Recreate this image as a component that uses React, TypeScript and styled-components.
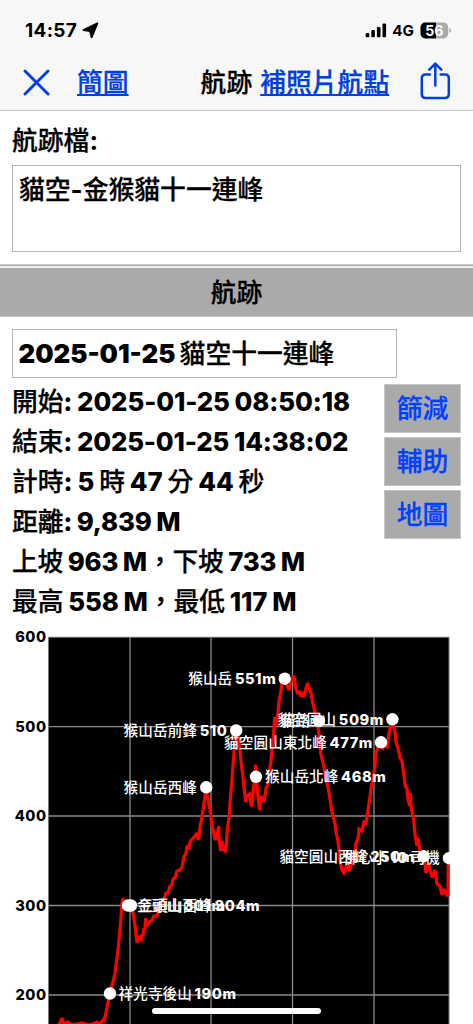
import React from "react";
import styled, { createGlobalStyle } from "styled-components";

const Global = createGlobalStyle`
  * { box-sizing: border-box; }
  html, body { margin: 0; padding: 0; background: #fff; }
  body { overflow: hidden; }
`;

const Screen = styled.div`
  width: 473px;
  height: 1024px;
  overflow: hidden;
  position: relative;
  background: #fff;
  color: #000;
  font-family: Inter, "Noto Sans CJK TC", sans-serif;
  font-weight: 700;
  font-size: 25.8px;
  line-height: 40px;
  white-space: nowrap;
`;

const Han = styled.span`
  font-family: "Noto Sans CJK TC", sans-serif;
  font-weight: 500;
  line-height: 1;
  -webkit-text-stroke: 0.25px currentColor;
`;

const Top = styled.header`
  height: 111px;
  background: #f7f7f7;
  border-bottom: 1px solid #c9c9c9;
`;

const StatusBar = styled.div`
  display: flex;
  align-items: center;
  height: 60px;
  padding: 1px 21px 0 25px;
  font-size: 19px;
  line-height: 24px;
`;

const Time = styled.span`
  font-weight: 700;
  margin-right: 5px;
  letter-spacing: 0.3px;
`;

const Spacer = styled.div`
  flex: 1;
`;

const Network = styled.span`
  font-size: 15.2px;
  font-weight: 700;
  margin: 0 6px 0 5px;
`;

const NavBar = styled.nav`
  display: flex;
  align-items: center;
  height: 44px;
  padding: 0 22px 0 23px;
`;

const NavLink = styled.a<{ $gap: number }>`
  color: #0040dd;
  margin-left: ${(p) => p.$gap}px;
  padding-top: 1px;
  text-decoration: underline;
  text-decoration-thickness: 2px;
  text-underline-offset: 2px;
  text-decoration-skip-ink: none;
`;

const NavTitle = styled.span`
  margin-left: 72px;
  padding-top: 1px;
`;

const FileSection = styled.section`
  height: 153px;
  padding: 10px 12px 0;
`;

const FileLabel = styled.div`
  height: 40px;
`;

const FileBox = styled.div`
  height: 87px;
  margin-top: 4px;
  padding: 4px 6px;
  border: 1px solid #b4b4b4;
`;

const SectionHead = styled.h2`
  height: 53px;
  margin: 0;
  border-top: 1px solid #ccc;
  border-bottom: 1px solid #c4c4c4;
  background: linear-gradient(#aaa 0 1px, #eee 1px 3px, #aaa 3px);
  font-size: inherit;
  line-height: 56px;
  text-align: center;
`;

const Details = styled.section`
  display: flex;
  justify-content: space-between;
  height: 306px;
  padding: 12px 12px 0;
`;

const NameBox = styled.div`
  width: 385px;
  height: 49px;
  margin-bottom: 4px;
  padding-left: 5.5px;
  border: 1px solid #b4b4b4;
  font-weight: 900;
  line-height: 47px;
  word-spacing: -1px;
`;

const Stats = styled.div`
  width: 372px;
`;

const Stat = styled.div<{ $word: number; $letter: number }>`
  height: 40px;
  font-weight: 800;
  word-spacing: ${(p) => p.$word}px;
  letter-spacing: ${(p) => p.$letter}px;
`;

const Actions = styled.div`
  display: flex;
  flex-direction: column;
  gap: 4px;
  margin-top: 55px;
`;

const Action = styled.button`
  width: 77px;
  height: 49px;
  padding: 0;
  border: 1px solid #c6c6c6;
  background: #aaa;
  color: #0040ff;
  font: inherit;
  line-height: 48px;
`;

const Chart = styled.svg`
  display: block;
`;

const HomeIndicator = styled.div`
  position: absolute;
  left: 152px;
  top: 1008px;
  width: 169px;
  height: 6px;
  border-radius: 3px;
  background: #fff;
`;

const split = (text: string) => text.split(/([\u3000-\u9fff\uff00-\uffef]+)/).filter(Boolean);
const isHan = (s: string) => /[\u3000-\u9fff\uff00-\uffef]/.test(s);

function Mixed({ children }: { children: string }) {
  return <>{split(children).map((s, i) => (isHan(s) ? <Han key={i}>{s}</Han> : s))}</>;
}

const stats = [
  { text: "開始: 2025-01-25 08:50:18", word: -0.8, letter: -0.12 },
  { text: "結束: 2025-01-25 14:38:02", word: -0.8, letter: -0.16 },
  { text: "計時: 5 時 47 分 44 秒", word: -0.6, letter: -0.08 },
  { text: "距離: 9,839 M", word: -1, letter: -0.15 },
  { text: "上坡 963 M，下坡 733 M", word: -0.7, letter: -0.25 },
  { text: "最高 558 M，最低 117 M", word: -0.7, letter: -0.1 },
];

const track =
  "58,1026 60,1023 62,1018 64,1024 68,1022 72,1025 82,1023 90,1025 97,1022 100,1024 103,1020 104,1022 106,1012 110,993 113,982 115,973 117,958 118,950 120,930 121,917 122,903 123,898 124,908 127,904 132,908 133,913 135,925 137,943 138.5,936 141,941 142,934 143,936 144,928 145,930 145.7,918 147,926 149,922 152,920 154,916 157,916 160,903 163,902 166,893 168,893 170,886 172,885 173,879 175,878 177,871 180,870 182,867 184,857 186,853 187,847 189,848 190,842 193,838 195,836 197,833 198.5,840 200,827 202,817 204,803 206,790 208,800 210,810 212,826 214,834 215,840 217,836 218.7,826 219,840 220.7,851 222,841 224,850 226,852 227,833 229,817 231,790 232,780 233,765 234,753 235,738 236,727 238,736 240,751 241,762 243,777 244,787 245.7,802 247,796 249.7,794 251,805 252,806 253,794 254,783 255.7,765 257,785 258,798 259.7,810 261,796 264,802 266,788 268,785 269,773 270.7,763 272,750 273,743 274.7,717 275.7,727 278,713 279,702 280.7,693 282,682 283.7,674 286,684 289,690 290.7,683 292,678 294,676 295.7,688 298,694 300,691 301,697 303,692 304,697 306,688 307.7,683 309,688 310.7,692 313,704 315,712 317,720 319,735 320.7,753 323,763 324,767 326,779 328,787 330,799 332,812 335,824 336,832 338,841 339,850 340,861 342,870 344,873 345,871 347,862 349,871 350,869 352,862 353,857 355,851 356,843 358,839 359,829 362,831 364,822 366,823 368,810 370,797 371,788 373,780 375,765 376,753 378,747 380,745 383,748 385,744 387,748 389,733 392,721 395,732 396,742 398,748 400,758 402,761 404,776 405,785 407,789 408,799 409.5,806 410.3,793 411,807 413.7,820 415,835 417,846 418,838 420,852 423,857 424.7,862 426,873 428.7,864 432,877 433,876 435,870 437,884 440,886 442,895 444,889 446,894 448,896 448.2,862";

type Peak = { x: number; y: number; text: string; at: number; end?: boolean };
const peaks: Peak[] = [
  { x: 110, y: 993.5, text: "祥光寺後山 190m", at: 118.5 },
  { x: 128, y: 905.5, text: "金頭山 301m", at: 137 },
  { x: 131, y: 905.5, text: "三頭山西峰 304m", at: 138.5 },
  { x: 206.2, y: 787.3, text: "猴山岳西峰", at: 197, end: true },
  { x: 236.2, y: 730.5, text: "猴山岳前鋒 510", at: 227.5, end: true },
  { x: 256, y: 776.8, text: "猴山岳北峰 468m", at: 265 },
  { x: 284.7, y: 678.7, text: "猴山岳 551m", at: 276.3, end: true },
  { x: 319, y: 721, text: "貓路", at: 310, end: true },
  { x: 381, y: 742.3, text: "貓空圓山東北峰 477m", at: 373, end: true },
  { x: 392.4, y: 719.3, text: "貓空圓山 509m", at: 384, end: true },
  { x: 423.5, y: 856.3, text: "貓空圓山西峰 250m", at: 415, end: true },
  { x: 449, y: 858.2, text: "佛心小 10 司機", at: 440, end: true },
];

const levels = [600, 500, 400, 300, 200];

function Profile() {
  return (
    <Chart width="473" height="401" viewBox="0 623 473 401">
      <rect x="48.5" y="637" width="400.5" height="390" fill="#000" />
      <path d="M130 637V1024M211 637V1024M292.5 637V1024M374 637V1024M48 726.7H449M48 816H449M48 905.5H449M48 995H449" stroke="#8a8a8a" strokeWidth="1.3" fill="none" />
      <path d="M48.5 1024V637.3H449V1024" stroke="#777" strokeWidth="1" fill="none" />
      <polyline points={track} fill="none" stroke="#f00" strokeWidth="3.2" strokeLinejoin="miter" strokeMiterlimit={2} />
      <g fontFamily='Inter, "Noto Sans CJK TC", sans-serif' fontSize="14.6" fontWeight="700">
        {levels.map((v, i) => (
          <text key={v} x="46.5" y={642.3 + i * 89.5} textAnchor="end" letterSpacing="0.5" fontWeight="800">{v}</text>
        ))}
        {peaks.map((p) => (
          <g key={p.text} fill="#fff">
            <circle cx={p.x} cy={p.y} r="6.2" />
            <text x={p.at} y={p.y + 5.2} textAnchor={p.end ? "end" : "start"} wordSpacing="-1.2">
              {split(p.text).map((s, i) => (
                <tspan key={i} fontWeight={isHan(s) ? 500 : 800} letterSpacing={isHan(s) ? 0.1 : 0.6}>{s}</tspan>
              ))}
            </text>
          </g>
        ))}
      </g>
    </Chart>
  );
}

export default function App() {
  return (
    <Screen>
      <Global />
      <Top>
        <StatusBar>
          <Time>14:57</Time>
          <svg width="17" height="17" viewBox="0 0 17 17">
            <path d="M15.4 1.4 9.6 15.3 8 9.1 1.4 8.1Z" stroke="#000" strokeWidth="1.8" strokeLinejoin="round" />
          </svg>
          <Spacer />
          <svg width="22" height="15" viewBox="0 0 22 15">
            <rect x="0.7" y="10" width="3.6" height="4.3" rx="1" />
            <rect x="6.3" y="7" width="3.6" height="7.3" rx="1" />
            <rect x="11.9" y="4" width="3.6" height="10.3" rx="1" />
            <rect x="17.5" y="0.6" width="3.6" height="13.7" rx="1" />
          </svg>
          <Network>4G</Network>
          <svg width="32" height="17" viewBox="0 0 32 17">
            <path d="M16 .5h7.5a4.7 4.7 0 0 1 4.7 4.7v6.6a4.7 4.7 0 0 1-4.7 4.7H16z" fill="#aaa" />
            <path d="M16 .5H5.2A4.7 4.7 0 0 0 .5 5.2v6.6a4.7 4.7 0 0 0 4.7 4.7H16z" fill="#000" />
            <path d="M29.3 6v5q1.7-.7 1.7-2.5T29.3 6Z" fill="#aaa" />
            <text x="14.3" y="13.5" textAnchor="middle" fill="#fff" fontSize="14" fontWeight="700">56</text>
          </svg>
        </StatusBar>
        <NavBar>
          <svg width="27" height="27" viewBox="0 0 27 27" fill="none" stroke="#0040dd" strokeWidth="2.9" strokeLinecap="round">
            <path d="M2 2 25 25M25 2 2 25" />
          </svg>
          <NavLink $gap={27}><Mixed>簡圖</Mixed></NavLink>
          <NavTitle><Mixed>航跡</Mixed></NavTitle>
          <NavLink $gap={8}><Mixed>補照片航點</Mixed></NavLink>
          <Spacer />
          <svg width="32" height="40" viewBox="0 0 32 40" fill="none" stroke="#0040dd" strokeWidth="2.5" strokeLinecap="round" strokeLinejoin="round">
            <path d="M11 12.5H6.2A3.4 3.4 0 0 0 2.8 15.9v16.7A3.4 3.4 0 0 0 6.2 36h20.2a3.4 3.4 0 0 0 3.4-3.4V15.9a3.4 3.4 0 0 0-3.4-3.4H21.6M16.3 23.5V2M10.3 7.7l6-6 6 6" />
          </svg>
        </NavBar>
      </Top>
      <FileSection>
        <FileLabel><Mixed>航跡檔:</Mixed></FileLabel>
        <FileBox><Mixed>貓空-金猴貓十一連峰</Mixed></FileBox>
      </FileSection>
      <SectionHead><Mixed>航跡</Mixed></SectionHead>
      <Details>
        <Stats>
          <NameBox><Mixed>2025-01-25 貓空十一連峰</Mixed></NameBox>
          {stats.map((s) => (
            <Stat key={s.text} $word={s.word} $letter={s.letter}><Mixed>{s.text}</Mixed></Stat>
          ))}
        </Stats>
        <Actions>
          {["篩減", "輔助", "地圖"].map((a) => (
            <Action key={a}><Mixed>{a}</Mixed></Action>
          ))}
        </Actions>
      </Details>
      <Profile />
      <HomeIndicator />
    </Screen>
  );
}
